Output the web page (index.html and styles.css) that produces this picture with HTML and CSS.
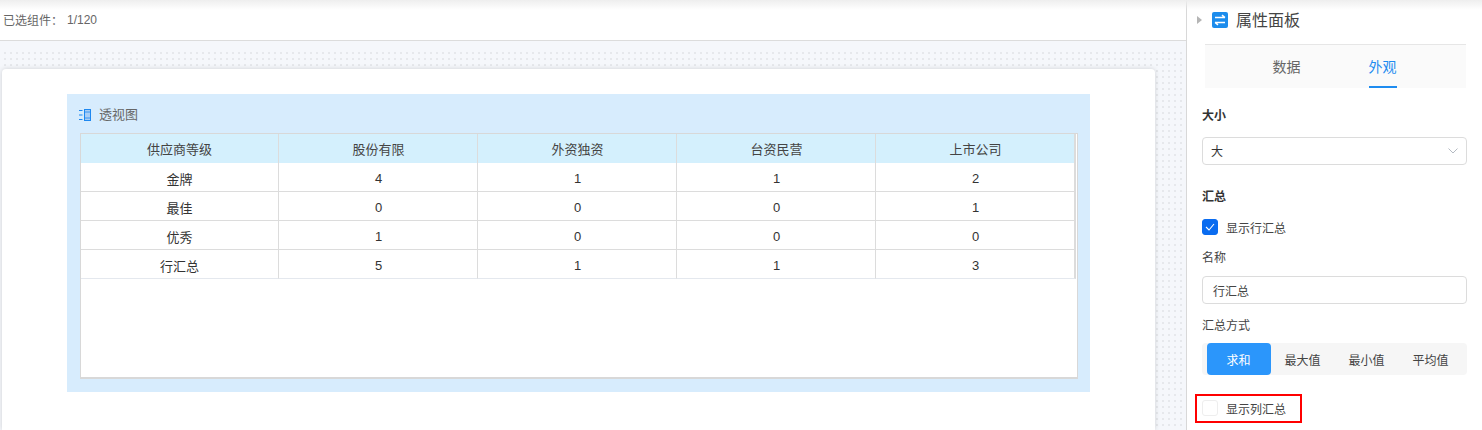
FILE: index.html
```html
<!DOCTYPE html>
<html lang="zh-CN">
<head>
<meta charset="utf-8">
<title>属性面板</title>
<link rel="stylesheet" href="styles.css">
</head>
<body>
<div class="app">
  <main class="main">
    <div class="topbar"><span class="sel-label">已选组件：</span><span class="sel-count">1/120</span></div>
    <div class="canvas">
      <section class="card">
        <div class="widget">
          <div class="widget-title">
            <svg class="pivot-icon" width="12" height="12" viewBox="0 0 12 12" aria-hidden="true">
              <rect x="5.5" y="0.5" width="6" height="11" fill="#a9cdf5" stroke="#1e88f0"/>
              <path d="M5.5 3h6M5.5 9h6" stroke="#1e88f0" stroke-width=".8"/>
              <path d="M0 1.5h3.5M0 6h3.5M0 10.5h3.5" stroke="#1e88f0"/>
            </svg>
            <span>透视图</span>
          </div>
          <div class="table-box">
            <table class="pivot">
              <thead>
                <tr><th>供应商等级</th><th>股份有限</th><th>外资独资</th><th>台资民营</th><th>上市公司</th></tr>
              </thead>
              <tbody>
                <tr><td>金牌</td><td>4</td><td>1</td><td>1</td><td>2</td></tr>
                <tr><td>最佳</td><td>0</td><td>0</td><td>0</td><td>1</td></tr>
                <tr><td>优秀</td><td>1</td><td>0</td><td>0</td><td>0</td></tr>
                <tr><td>行汇总</td><td>5</td><td>1</td><td>1</td><td>3</td></tr>
              </tbody>
            </table>
          </div>
        </div>
      </section>
    </div>
  </main>
  <aside class="panel">
    <header class="panel-head">
      <span class="caret"></span>
      <svg class="panel-icon" width="16" height="16" viewBox="0 0 16 16" aria-hidden="true">
        <rect width="16" height="16" rx="2" fill="#1c8cec"/>
        <path d="M3 5.5h10M10 3.2l3 2.3M3 10.5h10M6 12.8l-3-2.3" stroke="#fff" stroke-width="1.5" fill="none"/>
      </svg>
      <span class="panel-title">属性面板</span>
    </header>
    <nav class="tabs">
      <span class="tab">数据</span>
      <span class="tab active">外观</span>
    </nav>
    <div class="section-label size-label">大小</div>
    <div class="select"><span class="select-value">大</span>
      <svg width="10" height="6" viewBox="0 0 10 6" aria-hidden="true"><path d="M.5.5L5 5 9.5.5" fill="none" stroke="#b4bac2"/></svg>
    </div>
    <div class="section-label sum-label">汇总</div>
    <label class="check-row row-sum"><span class="check on">
      <svg width="10" height="8" viewBox="0 0 10 8" aria-hidden="true"><path d="M1 4l3 3 5-6" fill="none" stroke="#fff" stroke-width="1.1"/></svg>
    </span>显示行汇总</label>
    <div class="field-label name-label">名称</div>
    <div class="input">行汇总</div>
    <div class="field-label method-label">汇总方式</div>
    <div class="segmented">
      <span class="seg active">求和</span><span class="seg">最大值</span><span class="seg">最小值</span><span class="seg">平均值</span>
    </div>
    <label class="check-row row-col"><span class="check"></span>显示列汇总</label>
  </aside>
</div>
</body>
</html>
```
FILE: styles.css
```css
*, *::before, *::after { box-sizing: border-box; }
html, body { margin: 0; height: 430px; overflow: hidden; background: #fff; }
body { font-family: "Liberation Sans", "Noto Sans CJK SC", sans-serif; font-size: 12px; color: #333; }
.app { display: flex; height: 430px; position: relative; }
.app::before { content: ""; position: absolute; inset: 0 0 auto 0; height: 10px; background: linear-gradient(#eeeeee, rgba(255,255,255,0)); pointer-events: none; z-index: 3; }
.main { width: 1187px; flex: none; display: flex; flex-direction: column; border-right: 1px solid #d8d8d8; }
.topbar { height: 41px; flex: none; display: flex; align-items: center; padding: 0 0 1px 3px; border-bottom: 1px solid #dcdcdc; color: #666; background: #fff; }
.sel-label { margin-right: 4px; }
.canvas { flex: 1; padding: 28px 31px 0 2px; background-color: #f5f7fb; background-image: linear-gradient(#f5f7fb 7px, transparent 7px), radial-gradient(circle, #e6e8ec 1px, transparent 1.2px); background-size: 100% 100%, 6px 6px; background-position: 0 0, 2px 3px; }
.card { height: 100%; background: #fff; border-radius: 4px 4px 0 0; box-shadow: 0 0 5px rgba(0,0,0,.16); padding: 25px 65px 0; }
.widget { width: 1023px; height: 298px; background: #d7ecfd; padding: 0 12px 0 13px; }
.widget-title { height: 39px; display: flex; align-items: center; gap: 8px; color: #666; font-size: 13px; padding-top: 3px; margin-left: -1px; line-height: 16px; }
.pivot-icon { flex: none; }
.table-box { width: 998px; height: 246px; background: #fff; border: 1px solid #d8d8d8; border-bottom-width: 2px; }
.pivot { width: 995px; border-collapse: separate; border-spacing: 0; table-layout: fixed; }
.pivot th, .pivot td { border-right: 1px solid #dcdcdc; border-bottom: 1px solid #dcdcdc; text-align: center; font-weight: 400; font-size: 13px; color: #333; padding: 0 0 0 1px; width: 199px; }
.pivot th:first-child { width: 198px; padding-left: 0; }
.pivot td:first-child { padding-left: 0; }
.pivot th:last-child { width: 200px; }
.pivot th:last-child, .pivot td:last-child { border-right-width: 2px; }
.pivot th { height: 29px; background: #d4f0fd; border-bottom: 0; color: #444; }
.pivot td { height: 29px; padding-top: 2px; }
.pivot tbody tr:last-child td { border-bottom-color: #e4e8ee; }
.panel { flex: 1; min-width: 0; display: flex; flex-direction: column; padding: 0 15px 0 15px; }
.panel-head { height: 44px; flex: none; display: flex; align-items: center; padding-bottom: 4px; margin-left: -5px; }
.caret { width: 0; height: 0; border-left: 5px solid #b5b5b5; border-top: 4px solid transparent; border-bottom: 4px solid transparent; margin-right: 10px; }
.panel-icon { margin-right: 8px; flex: none; }
.panel-title { font-size: 16px; color: #444; line-height: 20px; padding-top: 2px; height: 22px; }
.tabs { height: 44px; flex: none; margin: 0 1px 0 3px; background: #fafafa; border-top: 1px solid #e6e6e6; display: flex; justify-content: center; gap: 68px; padding-right: 2px; }
.tab { font-size: 14px; color: #666; width: 28px; height: 43px; line-height: 44px; text-align: center; white-space: nowrap; }
.tab.active { color: #1e8cf0; border-bottom: 2px solid #1e8cf0; }
.section-label { font-weight: 700; font-size: 12px; color: #333; }
.size-label { margin-top: 20px; line-height: 16px; }
.select { margin-top: 13px; height: 28px; flex: none; border: 1px solid #dcdcdc; border-radius: 4px; display: flex; align-items: center; justify-content: space-between; padding: 0 8px 0 8px; color: #333; font-size: 12px; }
.select-value { padding-bottom: 2px; }
.sum-label { margin-top: 24px; line-height: 16px; }
.check-row { display: flex; align-items: center; gap: 8px; color: #444; font-size: 12px; height: 16px; }
.row-sum { margin-top: 14px; }
.row-col { margin-top: 25px; position: relative; }
.row-col::after { content: ""; position: absolute; left: -7px; top: -6px; width: 107px; height: 29px; border: 2px solid #f00; }
.check { width: 16px; height: 16px; border-radius: 3px; border: 1px solid #eeeeee; background: #fff; display: flex; align-items: center; justify-content: center; flex: none; }
.check.on { background: #0a6cf0; border-color: #0a6cf0; }
.field-label { font-size: 12px; color: #444; line-height: 16px; }
.name-label { margin-top: 15px; }
.input { margin-top: 10px; height: 28px; flex: none; border: 1px solid #dcdcdc; border-radius: 4px; display: flex; align-items: center; padding: 0 10px; color: #444; font-size: 12px; }
.method-label { margin-top: 14px; }
.segmented { margin-top: 9px; height: 32px; flex: none; background: #f6f6f6; border-radius: 4px; padding: 0 0 0 5px; display: flex; }
.seg { width: 64px; display: flex; align-items: center; justify-content: center; color: #444; font-size: 12px; padding-right: 1px; }
.seg.active { background: #2b96fb; color: #fff; border-radius: 4px; }
```
